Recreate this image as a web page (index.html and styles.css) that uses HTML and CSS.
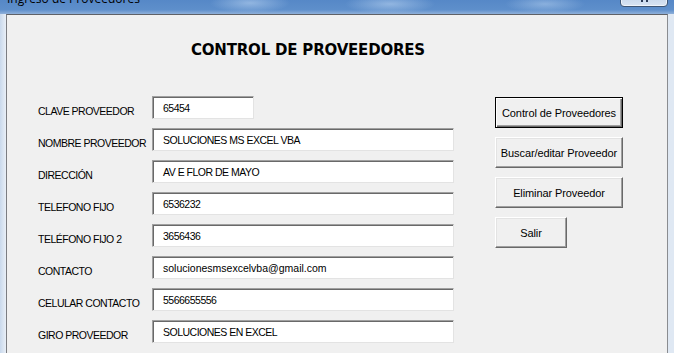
FILE: index.html
```html
<!DOCTYPE html>
<html lang="es">
<head>
<meta charset="utf-8">
<title>Ingreso de Proveedores</title>
<link rel="stylesheet" href="styles.css">
</head>
<body>
<div class="window">
  <div class="titlebar">
    <span class="title-text">Ingreso de Proveedores</span>
    <div class="close-btn"><span class="close-glyph"></span></div>
  </div>
  <div class="frame">
    <div class="panel">
      <h1 class="heading">CONTROL DE PROVEEDORES</h1>
      <div class="content">
        <div class="form">
          <div class="row"><label class="lbl">CLAVE PROVEEDOR</label><div class="box box-short">65454</div></div>
          <div class="row"><label class="lbl">NOMBRE PROVEEDOR</label><div class="box">SOLUCIONES MS EXCEL VBA</div></div>
          <div class="row"><label class="lbl">DIRECCIÓN</label><div class="box">AV E FLOR DE MAYO</div></div>
          <div class="row"><label class="lbl">TELEFONO FIJO</label><div class="box">6536232</div></div>
          <div class="row"><label class="lbl">TELÉFONO FIJO 2</label><div class="box">3656436</div></div>
          <div class="row"><label class="lbl">CONTACTO</label><div class="box box-mixed">solucionesmsexcelvba@gmail.com</div></div>
          <div class="row"><label class="lbl">CELULAR CONTACTO</label><div class="box">5566655556</div></div>
          <div class="row"><label class="lbl">GIRO PROVEEDOR</label><div class="box">SOLUCIONES EN EXCEL</div></div>
        </div>
        <div class="buttons">
          <button class="btn btn-default">Control de Proveedores</button>
          <button class="btn">Buscar/editar Proveedor</button>
          <button class="btn">Eliminar Proveedor</button>
          <button class="btn btn-small">Salir</button>
        </div>
      </div>
    </div>
  </div>
</div>
</body>
</html>
```
FILE: styles.css
```css
* { box-sizing: border-box; }
html, body { margin: 0; padding: 0; }
body {
  width: 674px;
  height: 353px;
  overflow: hidden;
  font-family: "Liberation Sans", Arial, sans-serif;
  font-size: 11px;
  color: #000;
  background: #dbe6f3;
}
.window { display: flex; flex-direction: column; height: 353px; }
.titlebar {
  position: relative;
  height: 14px;
  flex: none;
  overflow: hidden;
  background:
    radial-gradient(ellipse 40px 10px at 250px 3px, rgba(170,200,235,0.7), rgba(170,200,235,0) 100%),
    radial-gradient(ellipse 45px 10px at 390px 4px, rgba(170,200,235,0.7), rgba(170,200,235,0) 100%),
    radial-gradient(ellipse 40px 9px at 545px 4px, rgba(170,200,235,0.6), rgba(170,200,235,0) 100%),
    linear-gradient(180deg, #5688c7 0%, #5e8fcb 70%, #8fb0da 100%);
}
.title-text {
  display: block;
  margin-top: -9px;
  padding-left: 7px;
  font-family: "Open Sans", "Liberation Sans", sans-serif;
  font-size: 12px;
  line-height: 16px;
  color: #000;
}
.close-btn {
  position: absolute;
  left: 620px;
  top: -10px;
  width: 48px;
  height: 17px;
  border: 1px solid #3e5675;
  border-radius: 4px;
  background: linear-gradient(180deg, #b9cde6, #d8e4f2);
  box-shadow: inset 0 0 0 1px rgba(255,255,255,0.6);
}
.close-glyph {
  position: absolute;
  left: 20px;
  top: 8px;
  width: 7px;
  height: 3px;
  border-left: 2px solid #2a3a55;
  border-right: 2px solid #2a3a55;
}
.frame {
  flex: 1;
  display: flex;
  padding-left: 6px;
  background: linear-gradient(90deg, #c9d9ec 0, #e9eff7 6px, #dfe8f3 100%);
}
.panel {
  width: 662px;
  flex: none;
  background: #f0f0f0;
  border-top: 1px solid #5f6166;
  border-left: 1px solid #7b7d82;
  border-right: 1px solid #8a8c90;
  padding-top: 26px;
  padding-left: 31px;
}
.heading {
  margin: 0 0 36px 153px;
  font-family: "DejaVu Sans", "Liberation Sans", sans-serif;
  font-weight: bold;
  font-size: 15px;
  line-height: 19px;
  letter-spacing: -0.2px;
  color: #000;
}
.content { display: flex; gap: 41px; }
.form { display: flex; flex-direction: column; }
.row { display: flex; height: 32px; }
.lbl {
  width: 114px;
  flex: none;
  padding-top: 9px;
  font-size: 10.5px;
  letter-spacing: -0.5px;
  line-height: 13px;
  white-space: nowrap;
}
.box {
  width: 302px;
  height: 23px;
  background: #fff;
  border-top: 1px solid #a0a0a0;
  border-left: 1px solid #a0a0a0;
  border-right: 1px solid #e3e3e3;
  border-bottom: 1px solid #e3e3e3;
  box-shadow: inset 1px 1px 0 #696969;
  padding: 5px 0 0 10px;
  font-size: 10.5px;
  letter-spacing: -0.5px;
  line-height: 13px;
  white-space: nowrap;
}
.box-short { width: 102px; }
.box-mixed { letter-spacing: 0; }
.buttons {
  display: flex;
  flex-direction: column;
  gap: 9px;
  padding-top: 1px;
}
.btn {
  width: 128px;
  height: 31px;
  padding: 0;
  font-family: "Liberation Sans", Arial, sans-serif;
  font-size: 11px;
  letter-spacing: -0.1px;
  color: #000;
  background: #f0f0f0;
  border-top: 1px solid #fff;
  border-left: 1px solid #fff;
  border-right: 1px solid #696969;
  border-bottom: 1px solid #696969;
  box-shadow: inset -1px -1px 0 #a0a0a0, inset 1px 1px 0 #e3e3e3;
  border-radius: 0;
}
.btn-default {
  border: 1px solid #000;
  box-shadow: inset 1px 1px 0 #fff, inset -1px -1px 0 #696969, inset -2px -2px 0 #a0a0a0;
}
.btn-small { width: 72px; }
```
